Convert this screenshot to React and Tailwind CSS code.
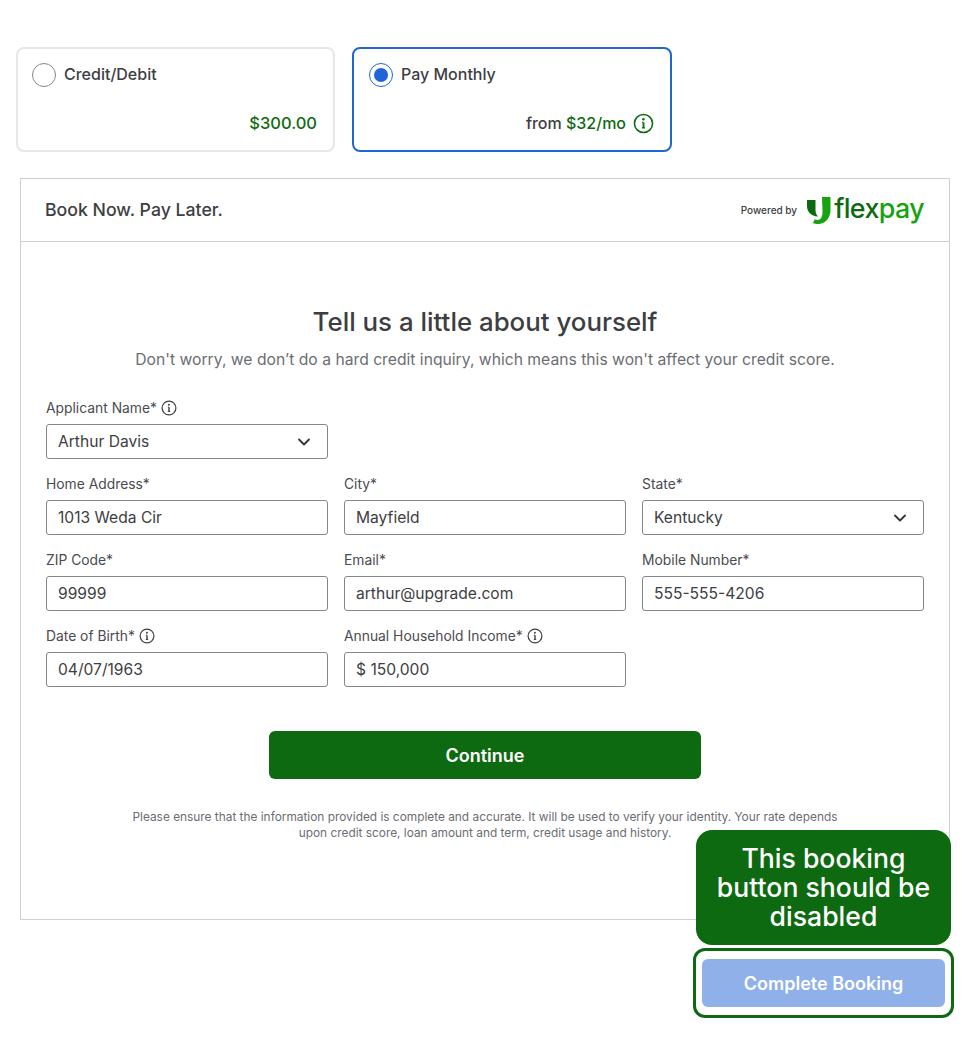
import React from 'react';
import { ChevronDown } from 'lucide-react';

const InfoIcon = ({ className }) => (
  <svg viewBox="0 0 16 16" fill="none" stroke="currentColor" className={className}>
    <circle cx="8" cy="8" r="6.9" strokeWidth="1.2" />
    <path d="M8 7.2v4.2" strokeWidth="1.4" />
    <path d="M6.800 11.400h2.400M6.900 7.200H8" strokeWidth="1" />
    <circle cx="7.900" cy="4.800" r="0.950" fill="currentColor" stroke="none" />
  </svg>
);

const FlexpayLogo = () => (
  <div className="flex items-center gap-[3px]">
    <svg width="24" height="28" viewBox="0 0 24 28" className="mt-[1px]">
      <path d="M0 3h8.500v10c0 2.500 .7 4.500 2.500 6.500C4 19 0 15 0 9z" fill="#0e6a10" />
      <path d="M15 0h8.500v13c0 8-5.500 14-12.500 14-2 0-3.500-.3-5-1l1.500-3.500c1 .3 2 .5 3 .5 3 0 5-3 5-8z" fill="#17a20f" />
    </svg>
    <span className="text-[26.8px] leading-none tracking-[-0.6px] font-medium font-['Inter',sans-serif] -mt-[3px]">
      <span className="text-[#0e6a10]">flex</span>
      <span className="text-[#17a20f]">pay</span>
    </span>
  </div>
);

const Field = ({ label, value, info, select }) => (
  <div className="flex flex-col">
    <label className="flex items-center gap-[4px] h-[16px] mb-[8px] text-[13.85px] leading-4 text-[#4a4b50]">
      {label}
      {info && <InfoIcon className="w-[16px] h-[16px] text-[#3d3e42]" />}
    </label>
    <div className="flex items-center justify-between h-[35px] pl-[11px] pr-[13px] border border-[#85868c] rounded-[3px] text-[15.6px] text-[#3d3e42]">
      <span>{value}</span>
      {select && <ChevronDown className="w-[20px] h-[20px] text-[#333438]" strokeWidth={2.2} />}
    </div>
  </div>
);

const PayCard = ({ title, selected, children }) => (
  <div className={`flex flex-col justify-between h-[105px] rounded-lg bg-white pr-[15px] pt-[14px] pb-[16px] border-2 ${selected ? 'w-[320px] pl-[15px] border-[#1f65d6]' : 'w-[319px] pl-[14px] border-[#e6e7ea]'}`}>
    <div className="flex items-center gap-[8px]">
      {selected ? (
        <span className="flex items-center justify-center w-[24px] h-[24px] rounded-full border border-[#1f65d6]">
          <span className="w-[14px] h-[14px] rounded-full bg-[#1f65d6]" />
        </span>
      ) : (
        <span className="w-[24px] h-[24px] rounded-full border border-[#85868c]" />
      )}
      <span className="text-[16px] font-medium text-[#3d3e42] -mt-[2px]">{title}</span>
    </div>
    <div className="flex items-center justify-end gap-[7px] h-[22px] text-[16px] font-medium">{children}</div>
  </div>
);

export default function App() {
  return (
    <div className="w-[969px] h-[1056px] bg-white font-['Inter',sans-serif] relative overflow-hidden pt-[47px]">
      <div className="flex gap-[17px] pl-[16px]">
        <PayCard title="Credit/Debit">
          <span className="text-[16.5px] text-[#0e6a10] pr-[1px]">$300.00</span>
        </PayCard>
        <PayCard title="Pay Monthly" selected>
          <span className="text-[#3d3e42]">from <span className="text-[#0e6a10]">$32/mo</span></span>
          <InfoIcon className="w-[21px] h-[21px] mr-[1px] text-[#0e6a10]" />
        </PayCard>
      </div>

      <div className="ml-[20px] mt-[26px] w-[930px] h-[742px] border border-[#cfd0d4]">
        <div className="flex items-center justify-between h-[63px] pl-[24px] pr-[25px] border-b border-[#cfd0d4]">
          <span className="text-[17.7px] font-medium text-[#3d3e42] mt-[1px]">Book Now. Pay Later.</span>
          <div className="flex items-center gap-[10px]">
            <span className="text-[10px] font-medium text-[#3d3e42]">Powered by</span>
            <FlexpayLogo />
          </div>
        </div>

        <div className="px-[25px] pt-[62px]">
          <h1 className="text-center text-[25.85px] leading-[36px] font-medium text-[#3d3e42]">Tell us a little about yourself</h1>
          <p className="mt-[8px] text-center text-[15.7px] leading-[24px] text-[#6c6d73]">
            Don't worry, we don’t do a hard credit inquiry, which means this won't affect your credit score.
          </p>

          <div className="grid grid-cols-[282px_282px_282px] gap-x-[16px] gap-y-[17px] mt-[28px]">
            <Field label="Applicant Name*" value="Arthur Davis" info select />
            <div className="col-span-2" />
            <Field label="Home Address*" value="1013 Weda Cir" />
            <Field label="City*" value="Mayfield" />
            <Field label="State*" value="Kentucky" select />
            <Field label="ZIP Code*" value="99999" />
            <Field label="Email*" value="arthur@upgrade.com" />
            <Field label="Mobile Number*" value="555-555-4206" />
            <Field label="Date of Birth*" value="04/07/1963" info />
            <Field label="Annual Household Income*" value="$ 150,000" info />
          </div>

          <button className="block mx-auto mt-[44px] w-[432px] h-[48px] rounded-md bg-[#0e6a10] text-white text-[18px] font-semibold">
            Continue
          </button>

          <p className="mx-auto mt-[30px] w-[720px] text-center text-[11.87px] leading-[16px] text-[#6c6d73]">
            Please ensure that the information provided is complete and accurate. It will be used to verify your identity. Your rate depends upon credit score, loan amount and term, credit usage and history.
          </p>
        </div>
      </div>

      <div className="flex justify-end pr-[15px] mt-[28px]">
        <div className="relative w-[261px] h-[70px] border-[3px] border-[#0e6a10] rounded-xl bg-white pl-[6px] pt-[8px]">
          <div className="absolute left-0 bottom-[70px] w-[255px] h-[115px] rounded-[16px] bg-[#0e6a10] text-white text-[26.6px] leading-[29px] font-medium text-center flex items-center justify-center px-[10px] pb-[1px]">
            This booking button should be disabled
          </div>
          <button className="w-[243px] h-[48px] rounded-md bg-[#8fb0e9] text-white text-[18px] font-semibold">
            Complete Booking
          </button>
        </div>
      </div>
    </div>
  );
}
